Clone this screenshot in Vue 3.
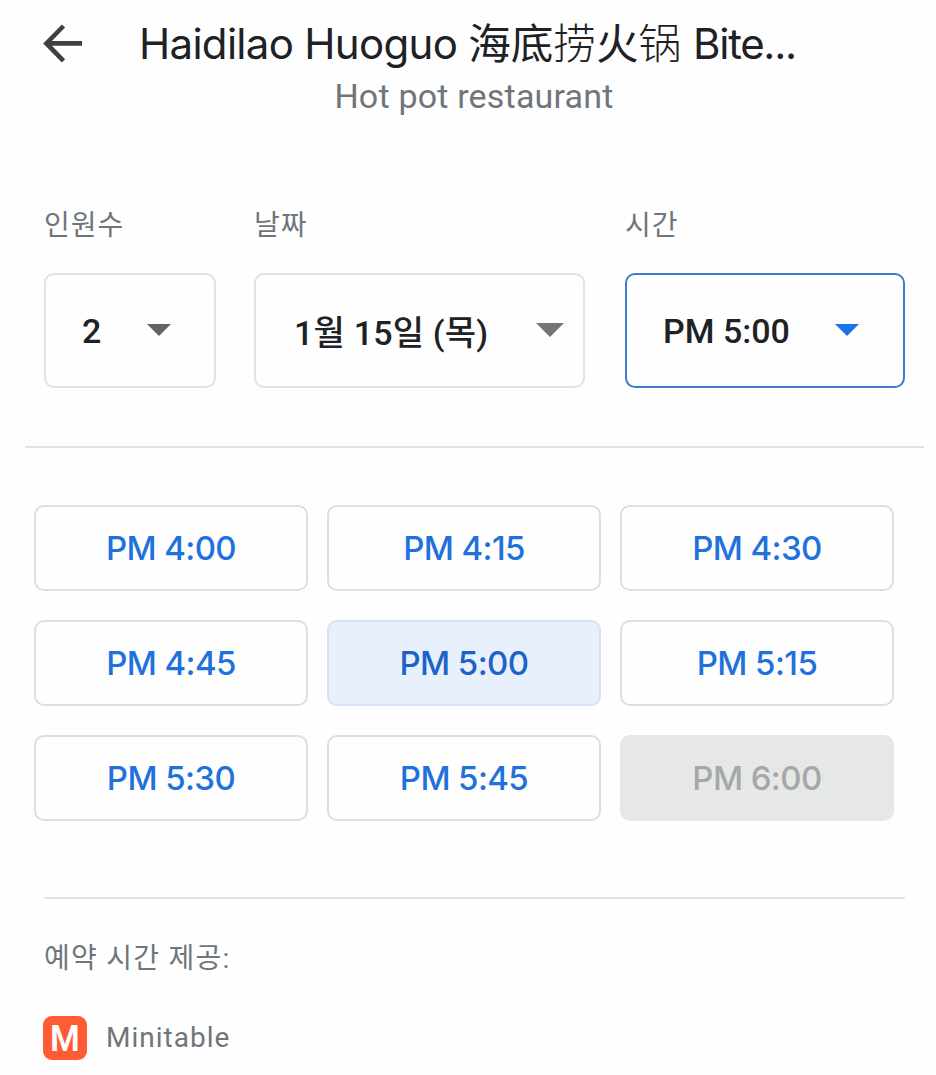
<template>
  <div class="booking">
    <header class="header">
      <button class="back-btn" aria-label="Back">
        <svg width="40" height="40" viewBox="0 0 40 40">
          <path d="M39 19.4H5M20.5 2L3.4 19.4L20.5 36.8" fill="none" stroke="#3c4043" stroke-width="4.6" />
        </svg>
      </button>
      <div class="titles">
        <h1>
          <span class="latin">Haidilao Huoguo</span>
          <span class="han">海底<i>捞</i>火<i>锅</i></span>
          <span class="latin bite">Bite...</span>
        </h1>
        <p>Hot pot restaurant</p>
      </div>
    </header>

    <div class="filters">
      <div v-for="item in filters" :key="item.name" class="form-group" :class="item.name">
        <label>{{ item.label }}</label>
        <button class="select">
          <span>{{ item.value }}</span>
          <svg class="arrow" viewBox="0 0 24 12" preserveAspectRatio="none">
            <path d="M0 0H24L12 12Z" fill="currentColor" />
          </svg>
        </button>
      </div>
    </div>

    <div class="slots">
      <button
        v-for="time in times"
        :key="time"
        class="slot"
        :class="{ selected: time === selectedTime }"
        :disabled="time === 'PM 6:00'"
        @click="selectTime(time)"
      >
        {{ time }}
      </button>
    </div>

    <footer class="provider">
      <p>예약 시간 제공:</p>
      <div class="provider-row">
        <span class="logo"><b>M</b></span>
        <span class="provider-name">Minitable</span>
      </div>
    </footer>
  </div>
</template>

<script setup>
import { reactive, ref } from 'vue';

const selectedTime = ref('PM 5:00');
const filters = reactive([
  { name: 'people', label: '인원수', value: '2' },
  { name: 'date', label: '날짜', value: '1월 15일 (목)' },
  { name: 'time', label: '시간', value: 'PM 5:00' },
]);
const times = [
  'PM 4:00', 'PM 4:15', 'PM 4:30',
  'PM 4:45', 'PM 5:00', 'PM 5:15',
  'PM 5:30', 'PM 5:45', 'PM 6:00',
];

const selectTime = (time) => {
  selectedTime.value = time;
  filters[2].value = time;
};
</script>

<style>
body {
  background: #fefefe;
}
</style>

<style scoped>
.booking {
  width: 936px;
  height: 1075px;
  box-sizing: border-box;
  overflow: hidden;
  font-family: Roboto, "Noto Sans CJK KR", sans-serif;
  color: #202124;
}

button {
  background: none;
  border: none;
  padding: 0;
  margin: 0;
  font-family: inherit;
  color: inherit;
  box-sizing: border-box;
}

.header {
  display: flex;
  height: 208px;
  padding-left: 43px;
  box-sizing: border-box;
}

.back-btn {
  width: 40px;
  height: 40px;
  margin-top: 24px;
}

.back-btn svg {
  display: block;
}

.titles {
  width: 780px;
  padding-top: 15px;
}

h1 {
  display: flex;
  align-items: baseline;
  margin: 0 0 0 56px;
  height: 52px;
  line-height: 52px;
  font-size: 42px;
  font-weight: 400;
  white-space: nowrap;
}

.latin {
  font-family: Inter, sans-serif;
  letter-spacing: -0.7px;
}

.bite {
  letter-spacing: -1.3px;
}

.han {
  margin: 0 12px 0 11px;
  font-family: "Noto Sans CJK SC", sans-serif;
  font-size: 42.6px;
  font-weight: 400;
}

.han i {
  font-style: normal;
  font-weight: 300;
}

.titles p {
  margin: 9px 0 0;
  padding-left: 2px;
  text-align: center;
  font-size: 34px;
  line-height: 40px;
  letter-spacing: 0.2px;
  color: #70757a;
}

.filters {
  display: flex;
  height: 240px;
  margin: 0 12px 0 25px;
  padding-left: 19px;
  box-sizing: border-box;
  border-bottom: 2px solid #e1e2e4;
}

label {
  display: block;
  height: 65px;
  padding-top: 2px;
  box-sizing: border-box;
  line-height: 32px;
  font-size: 28px;
  letter-spacing: 1px;
  color: #70757a;
}

.select {
  display: flex;
  align-items: center;
  justify-content: space-between;
  width: 100%;
  height: 115px;
  border: 2px solid #e1e2e4;
  border-radius: 10px;
  font-size: 34px;
  font-weight: 500;
}

.people {
  width: 172px;
  margin-right: 38px;
}

.date {
  width: 331px;
  margin-right: 40px;
}

.time {
  width: 280px;
}

.people .select {
  padding: 0 43px 0 36px;
}

.date .select {
  padding: 0 19px 1px 38px;
  letter-spacing: 0.2px;
}

.time .select {
  padding: 0 44px 0 36px;
  border-color: #3b7bd0;
}

.arrow {
  width: 24px;
  height: 12px;
  margin-bottom: 1px;
  color: #5f6368;
}

.date .arrow {
  width: 28px;
  height: 14px;
  color: #757575;
}

.time .arrow {
  color: #1a73e8;
}

.slots {
  display: grid;
  grid-template-columns: repeat(3, 274px);
  grid-auto-rows: 86px;
  gap: 29px 19px;
  padding: 57px 0 0 34px;
}

.slot {
  border: 2px solid #dddee0;
  border-radius: 10px;
  font-family: Inter, sans-serif;
  font-size: 33px;
  font-weight: 500;
  letter-spacing: -0.6px;
  color: #1f71dc;
}

.slot.selected {
  background: #e8f0fc;
  border-color: #d5e3f7;
  color: #1c62c9;
}

.slot:disabled {
  background: #e6e8e7;
  border-color: #e6e8e7;
  color: #a5a8a8;
}

.provider {
  margin: 76px 31px 0 44px;
  border-top: 2px solid #e1e2e4;
  color: #70757a;
  font-size: 28px;
}

.provider p {
  margin: 42px 0 0;
  line-height: 36px;
  letter-spacing: 1.25px;
}

.provider-row {
  display: flex;
  align-items: center;
  margin: 39px 0 0 -1px;
}

.logo {
  width: 44px;
  height: 44px;
  margin-right: 19px;
  border-radius: 9px;
  background: #ff5c35;
  color: #fff;
  font-size: 37px;
  line-height: 45px;
  text-align: center;
}

.logo b {
  display: block;
  font-weight: 600;
  transform: scaleX(0.92);
}

.provider-name {
  line-height: 32px;
  letter-spacing: 1px;
}
</style>
